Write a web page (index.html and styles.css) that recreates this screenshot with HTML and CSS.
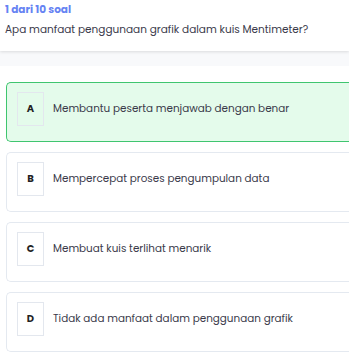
FILE: index.html
```html
<!DOCTYPE html>
<html lang="id">
<head>
  <meta charset="UTF-8" />
  <meta name="viewport" content="width=device-width, initial-scale=1.0" />
  <title>Kuis Mentimeter</title>
  <link rel="stylesheet" href="styles.css">
</head>
<body>
  <header class="quiz-head">
    <div class="counter">1 dari 10 soal</div>
    <div class="question">Apa manfaat penggunaan grafik dalam kuis Mentimeter?</div>
  </header>
  <div class="strip"></div>

  <main class="options">
    <div class="option selected">
      <span class="letter">A</span>
      <span class="label">Membantu peserta menjawab dengan benar</span>
    </div>
    <div class="option">
      <span class="letter">B</span>
      <span class="label">Mempercepat proses pengumpulan data</span>
    </div>
    <div class="option">
      <span class="letter">C</span>
      <span class="label">Membuat kuis terlihat menarik</span>
    </div>
    <div class="option">
      <span class="letter">D</span>
      <span class="label">Tidak ada manfaat dalam penggunaan grafik</span>
    </div>
  </main>
</body>
</html>
```

FILE: styles.css
```css
body {
  margin: 0;
  font-family: "Poppins", "Noto Sans", "Open Sans", sans-serif;
  background-color: #ffffff;
  color: #333;
  overflow: hidden;
}
.quiz-head {
  background: #ffffff;
  height: 51px;
  padding: 3px 5px 0;
  box-sizing: border-box;
  box-shadow: 0 1px 3px rgba(0, 0, 0, 0.12);
  position: relative;
}
.counter {
  font-size: 10.5px;
  font-weight: 700;
  color: #6683f3;
  line-height: 14px;
}
.question {
  font-size: 10.5px;
  color: #3a3a4a;
  line-height: 14px;
  margin-top: 6px;
}
.strip {
  height: 15px;
  background: #f8f9fb;
}
.options {
  padding: 16px 0 0 6px;
  display: flex;
  flex-direction: column;
  gap: 10px;
}
.option {
  display: flex;
  align-items: flex-start;
  gap: 9px;
  height: 60px;
  box-sizing: border-box;
  padding: 9px 10px;
  border: 1px solid #e4e9f0;
  border-right: none;
  border-radius: 5px 0 0 5px;
  background: #ffffff;
}
.option.selected {
  border-color: #3fc56f;
  background: #e4fbeb;
}
.letter {
  width: 27px;
  height: 34px;
  box-sizing: border-box;
  border: 1px solid #e3e7ee;
  display: flex;
  align-items: center;
  justify-content: center;
  font-size: 10px;
  font-weight: 700;
  color: #222;
  flex-shrink: 0;
}
.label {
  font-size: 10.4px;
  color: #3a3a4a;
  line-height: 34px;
}
```
